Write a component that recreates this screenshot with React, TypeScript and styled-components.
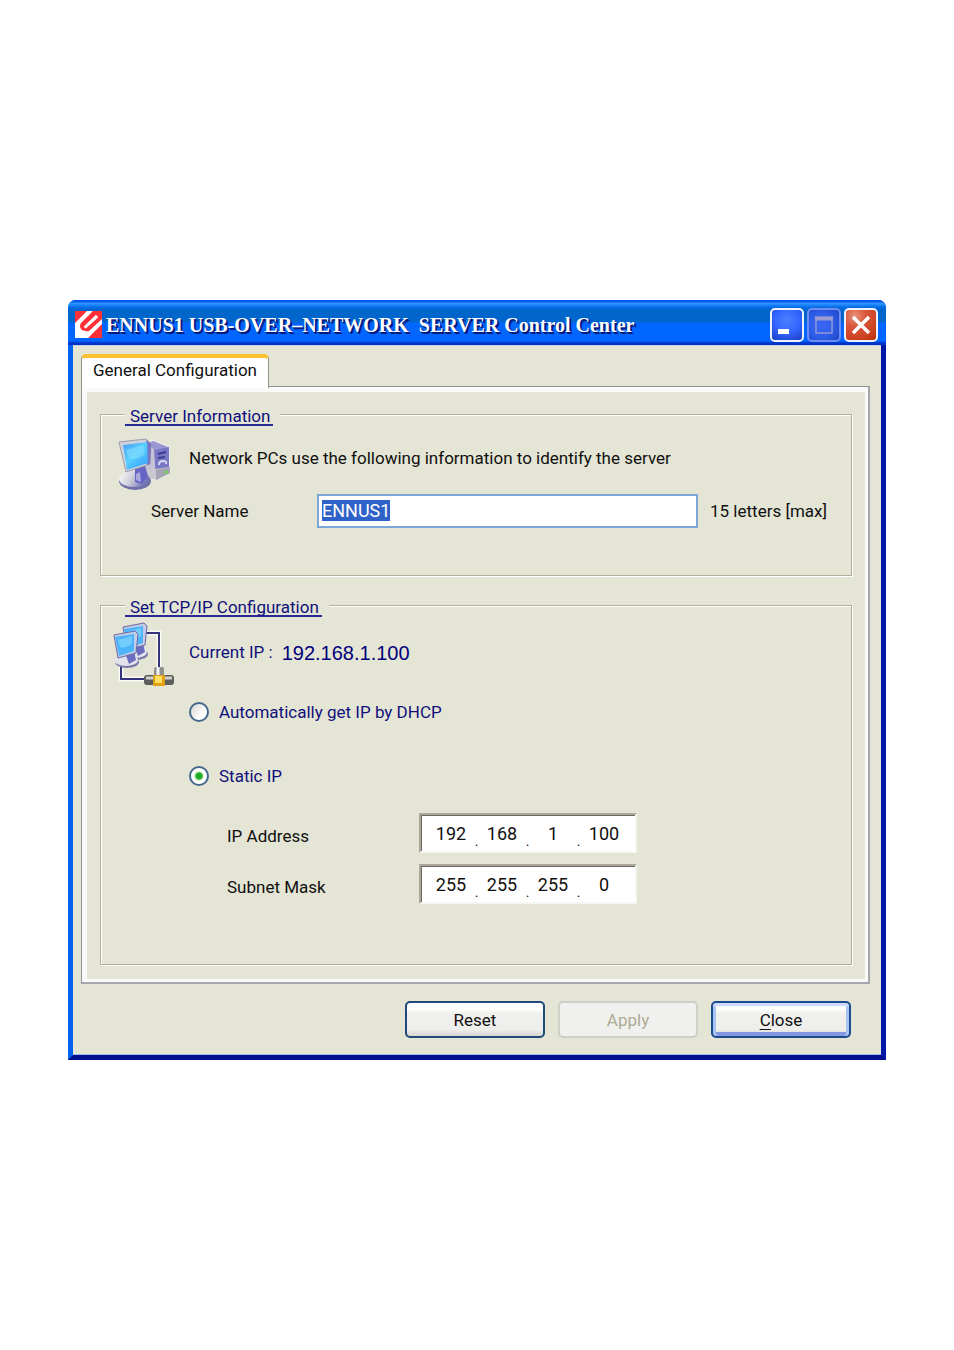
import React, { useEffect, useRef, useState } from 'react';
import styled, { createGlobalStyle, css } from 'styled-components';

const face = '#e5e5d5';
const navy = '#10107c';

const GlobalStyle = createGlobalStyle`
  * { box-sizing: border-box; }
  body {
    margin: 0;
    background: #fff;
    color: #101010;
    font: 17px/20px Roboto, "Liberation Sans", sans-serif;
  }
  input, button { font: inherit; color: inherit; }
`;

const Page = styled.main`
  padding: 300px 68px;
`;

const Window = styled.section`
  border: solid;
  border-width: 0 5px 5px 5px;
  border-color: #0054e3 #0018a8 #000f90 #0060f0;
  border-radius: 8px 8px 0 0;
  background: #0054e3;
`;

const TitleBar = styled.header`
  display: flex;
  align-items: center;
  gap: 4px;
  height: 45px;
  margin: 0 -5px;
  padding: 4px 8px 0 7px;
  border-radius: 8px 8px 0 0;
  background: linear-gradient(
    #0058ee 0, #0058ee 2px, #3399ff 3px, #1c84fa 5px, #0066e0 8px,
    #0066cc 10px, #0066cc 22px, #0066ff 23px, #0066ff 41px, #0033cc 43px, #0033bb 45px
  );
`;

const Title = styled.h1`
  flex: 1;
  margin: 0;
  color: #fff;
  font: bold 20px/24px "Liberation Serif", serif;
  white-space: pre;
  text-shadow: 1px 1px 0 #001a80, 2px 2px 0 #001a80;
`;

const Captions = styled.div`
  display: flex;
  gap: 3px;
`;

const CaptionButton = styled.button<{ $tone: 'blue' | 'muted' | 'red' }>`
  display: block;
  width: 34px;
  height: 34px;
  padding: 0;
  border: 2px solid ${p => (p.$tone === 'muted' ? '#6f8cf0' : '#eef2ff')};
  border-radius: 5px;
  background: ${p =>
    p.$tone === 'red'
      ? 'radial-gradient(circle at 30% 20%, #e89478 0, #d9543a 35%, #cc4422 70%, #b82c08 100%)'
      : p.$tone === 'muted'
        ? 'radial-gradient(circle at 40% 50%, #3a66f5 0, #2f5ee8 50%, #1d46c8 100%)'
        : 'radial-gradient(circle at 50% 35%, #4a80ff 0, #3366ff 50%, #1a3cc0 100%)'};
  svg { display: block; }
`;

const Client = styled.div`
  padding: 8px 11px 16px 8px;
  border-top: 1px solid #c8cce0;
  border-bottom: 1px solid #9db8e8;
  background: ${face};
`;

const TabList = styled.div`
  display: flex;
`;

const Tab = styled.button`
  position: relative;
  z-index: 1;
  height: 34px;
  margin-bottom: -2px;
  padding: 0 11px 6px;
  border: 1px solid #91918f;
  border-top: 4px solid #fcc030;
  border-bottom: 0;
  border-radius: 5px 5px 0 0;
  background: #fff;
  line-height: 24px;
  white-space: nowrap;
`;

const Panel = styled.div`
  padding: 5px 3px 3px 5px;
  border: 1px solid #919197;
  border-right: 2px solid #a6a6ae;
  border-bottom: 2px solid #a6a6ae;
  background: #fafaf8;
`;

const PanelBody = styled.form`
  display: flex;
  flex-direction: column;
  gap: 17px;
  padding: 10px 13px 14px 13px;
  background: ${face};
`;

const Group = styled.fieldset<{ $bottom: number }>`
  min-width: 0;
  margin: 0;
  padding: 0 0 ${p => p.$bottom}px;
  border: 1px solid #b3b09a;
  box-shadow: 1px 1px 0 #fff, inset 1px 1px 0 #fff;
`;

const Legend = styled.legend`
  margin-left: 24px;
  padding: 0 7px 0 0;
  background: ${face};
  color: ${navy};
`;

const LegendText = styled.span`
  display: block;
  padding: 6px 3px 0 5px;
  border-bottom: 2px solid #2a2a94;
  line-height: 16px;
`;

const ServerIntro = styled.div`
  display: flex;
  gap: 17px;
  padding: 12px 16px 0 17px;
  p { margin: 0; padding-top: 10px; }
  svg { flex: none; }
`;

const NameRow = styled.div`
  display: flex;
  align-items: center;
  gap: 12px;
  margin-top: 2px;
  padding: 0 24px 0 50px;
  label { width: 154px; }
`;

const NameInput = styled.input`
  flex: 1;
  min-width: 0;
  height: 34px;
  padding: 0 3px 2px;
  border: 2px solid #7da7d9;
  background: #fff;
  font-size: 18px;
  line-height: 21px;
  outline: 0;
  &::selection { background: #2f62c8; color: #fff; }
`;

const NetworkLayout = styled.div`
  display: flex;
  align-items: flex-start;
  gap: 13px;
  padding: 5px 16px 0 11px;
  color: ${navy};
  > svg { flex: none; }
`;

const NetworkSettings = styled.div`
  flex: 1;
  padding-top: 20px;
`;

const CurrentIp = styled.p`
  display: flex;
  gap: 9px;
  margin: 0 0 38px;
  output { color: #00007c; font: 20px/22px "Liberation Sans", sans-serif; }
`;

const RadioLabel = styled.label`
  display: flex;
  align-items: center;
  gap: 10px;
  margin-bottom: 44px;
`;

const Radio = styled.input`
  appearance: none;
  width: 20px;
  height: 20px;
  margin: 0;
  border: 2px solid #44688c;
  border-radius: 50%;
  background: linear-gradient(135deg, #d8d8d4, #fff 70%);
  &:checked {
    background: radial-gradient(circle, #189c18 0, #2cb42c 3px, #fff 5px);
  }
`;

const AddressTable = styled.div`
  display: grid;
  grid-template-columns: 192px auto;
  justify-content: start;
  align-items: center;
  row-gap: 11px;
  margin-top: -17px;
  padding-left: 38px;
  color: #101010;
`;

const AddressLabel = styled.span`
  padding-top: 6px;
`;

const AddressBox = styled.div`
  display: flex;
  width: 218px;
  height: 40px;
  padding: 0 10px;
  border: 2px solid;
  border-color: #aca899 #f6f6f2 #f6f6f2 #aca899;
  background: #fff;
  box-shadow: inset 1px 1px 0 #6b6962;
`;

const Octet = styled.input`
  width: 40px;
  height: 36px;
  padding: 0;
  border: 0;
  background: transparent;
  font-size: 18px;
  text-align: center;
  outline: 0;
`;

const Dot = styled.span`
  width: 11px;
  line-height: 52px;
  text-align: center;
  font-size: 14px;
`;

const Footer = styled.footer`
  display: flex;
  justify-content: flex-end;
  gap: 13px;
  padding: 17px 19px 0 0;
`;

const PushButton = styled.button<{ $isDefault?: boolean }>`
  width: 140px;
  height: 37px;
  padding: 0;
  border: 2px solid #1f4a7c;
  border-radius: 5px;
  background: linear-gradient(#fff 0, #fefefc 20%, #f0f0ee 30%, #eeeeec 80%, #d8d6d0 100%);
  u { text-underline-offset: 3px; }
  ${p => p.$isDefault && css`
    border-color: #1c4c90;
    box-shadow: inset 0 3px 0 #cfdcff, inset 3px 0 0 #a8c4f4, inset -3px 0 0 #a8c4f4, inset 0 -4px 0 #8298e0;
  `}
  &:disabled {
    border-color: #cfcfc9;
    background: #f0f0ee;
    color: #aeab94;
  }
`;

const BrandIcon = () => (
  <svg width="27" height="27" viewBox="0 0 27 27" aria-hidden="true">
    <rect width="27" height="27" fill="#ff3038" />
    <path d="M12 0H18L6 12Q4 15 6 18T13 19L27 6V13L13 27H0V12Z" fill="#fff" />
    <path d="M10 17 22 5" stroke="#fff" strokeWidth="4" />
    <path d="M18 0H25L8 16Q6 16 6 14Z" fill="#ff3038" />
    <path d="M27 3V8L14 20Q11 21 9 19Z" fill="#ff3038" />
  </svg>
);

const ServerIcon = () => (
  <svg width="54" height="54" viewBox="0 0 54 54" aria-hidden="true">
    <defs>
      <linearGradient id="srvScreen" x1="0" y1="0" x2="0.8" y2="1">
        <stop offset="0" stopColor="#4a9cf4" />
        <stop offset="0.5" stopColor="#58d0ff" />
        <stop offset="1" stopColor="#38a0f8" />
      </linearGradient>
      <linearGradient id="srvBase" x1="0" y1="0" x2="1" y2="0.3">
        <stop offset="0" stopColor="#fff" />
        <stop offset="0.5" stopColor="#d0d0da" />
        <stop offset="1" stopColor="#7474b8" />
      </linearGradient>
    </defs>
    <path d="M27 8 35 2 51 9 52 34 38 42 26 38Z" fill="#c4c4d6" stroke="#f4f4f8" />
    <path d="M36 11 51 9V33L38 41Z" fill="#7878c4" />
    <path d="M29 6 35 3 50 9 37 12Z" fill="#9a98d0" />
    <path d="M40 16 48 14M40 20 47 19" stroke="#3e3e94" strokeWidth="2" />
    <path d="M41 27q0-4 4-4t3 3" fill="none" stroke="#d6d6f0" strokeWidth="2" />
    <path d="M25 34 38 31 51 29V35L39 42 26 38Z" fill="#c8c8d0" />
    <path d="M38 32V42L52 35V29Z" fill="#a4a4b4" />
    <circle cx="48" cy="34" r="1.5" fill="#62e838" />
    <ellipse cx="17" cy="43" rx="16" ry="9" fill="#7070a8" />
    <ellipse cx="16" cy="41" rx="15" ry="8" fill="url(#srvBase)" />
    <path d="M17 31 27 28 30 38 24 46 17 44Z" fill="#6664c4" />
    <path d="M18 36 22 34 23 44 18 42Z" fill="#aaa8dc" />
    <path d="M1 4 28 1 33 6 32 26 8 34Z" fill="#d2d2dc" stroke="#9a9aae" />
    <path d="M28 2 33 6 32 26 29 27Z" fill="#7674c4" />
    <path d="M5 7 29 4 30 25 9 32Z" fill="url(#srvScreen)" />
    <path d="M8 12 25 7 27 16Q19 23 11 20Z" fill="#8ee4ff" opacity="0.5" />
  </svg>
);

const Pc = ({ x, y }: { x: number; y: number }) => (
  <g transform={`translate(${x} ${y})`}>
    <ellipse cx="13" cy="31" rx="12" ry="6" fill="#7878a4" />
    <ellipse cx="12" cy="29" rx="12" ry="6" fill="#e2e2ea" />
    <path d="M11 22 20 20 22 29 15 33Z" fill="#6c6cc0" />
    <path d="M0 4 21 0 24 3 22 22 4 27Z" fill="#c4cce4" stroke="#6a6aa8" />
    <path d="M1 6 20 3 20 20 5 25Z" fill="#4cb4fa" />
    <path d="M4 9 18 5 18 13Q11 18 6 16Z" fill="#8cdcff" opacity="0.6" />
  </g>
);

const NetworkIcon = () => (
  <svg width="64" height="66" viewBox="0 0 64 66" aria-hidden="true">
    <path d="M32 11H47V46M9 42V57H32" fill="none" stroke="#f8f8f4" strokeWidth="5" />
    <path d="M32 11H47V46M9 42V57H32" fill="none" stroke="#34347c" strokeWidth="2" />
    <Pc x={11} y={1} />
    <Pc x={2} y={9} />
    <rect x="42" y="45" width="10" height="9" rx="2" fill="#90908c" />
    <path d="M46 45V54" stroke="#f4f4f4" strokeWidth="3" />
    <rect x="32" y="53" width="30" height="10" rx="3" fill="#5c5c5c" />
    <path d="M34 56H60" stroke="#d0d0cc" strokeWidth="3" />
    <rect x="41" y="53" width="12" height="11" rx="1" fill="#e0a010" />
    <rect x="43" y="54" width="7" height="7" fill="#ffe060" />
  </svg>
);

type AddressFieldProps = { label: string; octets: string[] };

const AddressField = ({ label, octets }: AddressFieldProps) => {
  const id = label.toLowerCase().replace(' ', '-');
  return (
    <>
      <AddressLabel id={id}>{label}</AddressLabel>
      <AddressBox role="group" aria-labelledby={id}>
        {octets.map((value, i) => (
          <React.Fragment key={i}>
            {i > 0 && <Dot>.</Dot>}
            <Octet defaultValue={value} maxLength={3} aria-labelledby={id} />
          </React.Fragment>
        ))}
      </AddressBox>
    </>
  );
};

export default function App() {
  const nameRef = useRef<HTMLInputElement>(null);
  const [mode, setMode] = useState<'dhcp' | 'static'>('static');

  useEffect(() => {
    nameRef.current?.focus();
    nameRef.current?.select();
  }, []);

  return (
    <Page>
      <GlobalStyle />
      <Window>
        <TitleBar>
          <BrandIcon />
          <Title>{'ENNUS1 USB-OVER–NETWORK  SERVER Control Center'}</Title>
          <Captions>
            <CaptionButton $tone="blue" aria-label="Minimize">
              <svg width="30" height="30"><rect x="6" y="19" width="11" height="5" fill="#fff" /></svg>
            </CaptionButton>
            <CaptionButton $tone="muted" aria-label="Maximize" disabled>
              <svg width="30" height="30">
                <path d="M7 7.5H23V23H7Z" fill="none" stroke="#8f98dc" strokeWidth="1.5" />
                <path d="M6 8.5H24" stroke="#9c9cd4" strokeWidth="4" />
              </svg>
            </CaptionButton>
            <CaptionButton $tone="red" aria-label="Close window">
              <svg width="30" height="30"><path d="M7 7 23 23M23 7 7 23" stroke="#fff" strokeWidth="3.5" /></svg>
            </CaptionButton>
          </Captions>
        </TitleBar>
        <Client>
          <TabList role="tablist">
            <Tab role="tab" aria-selected="true">General Configuration</Tab>
          </TabList>
          <Panel role="tabpanel">
            <PanelBody>
              <Group $bottom={47}>
                <Legend><LegendText>Server Information</LegendText></Legend>
                <ServerIntro>
                  <ServerIcon />
                  <p>Network PCs use the following information to identify the server</p>
                </ServerIntro>
                <NameRow>
                  <label htmlFor="server-name">Server Name</label>
                  <NameInput id="server-name" ref={nameRef} defaultValue="ENNUS1" maxLength={15} />
                  <span>15 letters [max]</span>
                </NameRow>
              </Group>
              <Group $bottom={60}>
                <Legend><LegendText>Set TCP/IP Configuration</LegendText></Legend>
                <NetworkLayout>
                  <NetworkIcon />
                  <NetworkSettings>
                    <CurrentIp>
                      <span>Current IP :</span>
                      <output>192.168.1.100</output>
                    </CurrentIp>
                    <RadioLabel>
                      <Radio type="radio" name="mode" checked={mode === 'dhcp'} onChange={() => setMode('dhcp')} />
                      Automatically get IP by DHCP
                    </RadioLabel>
                    <RadioLabel>
                      <Radio type="radio" name="mode" checked={mode === 'static'} onChange={() => setMode('static')} />
                      Static IP
                    </RadioLabel>
                    <AddressTable>
                      <AddressField label="IP Address" octets={['192', '168', '1', '100']} />
                      <AddressField label="Subnet Mask" octets={['255', '255', '255', '0']} />
                    </AddressTable>
                  </NetworkSettings>
                </NetworkLayout>
              </Group>
            </PanelBody>
          </Panel>
          <Footer>
            <PushButton>Reset</PushButton>
            <PushButton disabled>Apply</PushButton>
            <PushButton $isDefault><u>C</u>lose</PushButton>
          </Footer>
        </Client>
      </Window>
    </Page>
  );
}
